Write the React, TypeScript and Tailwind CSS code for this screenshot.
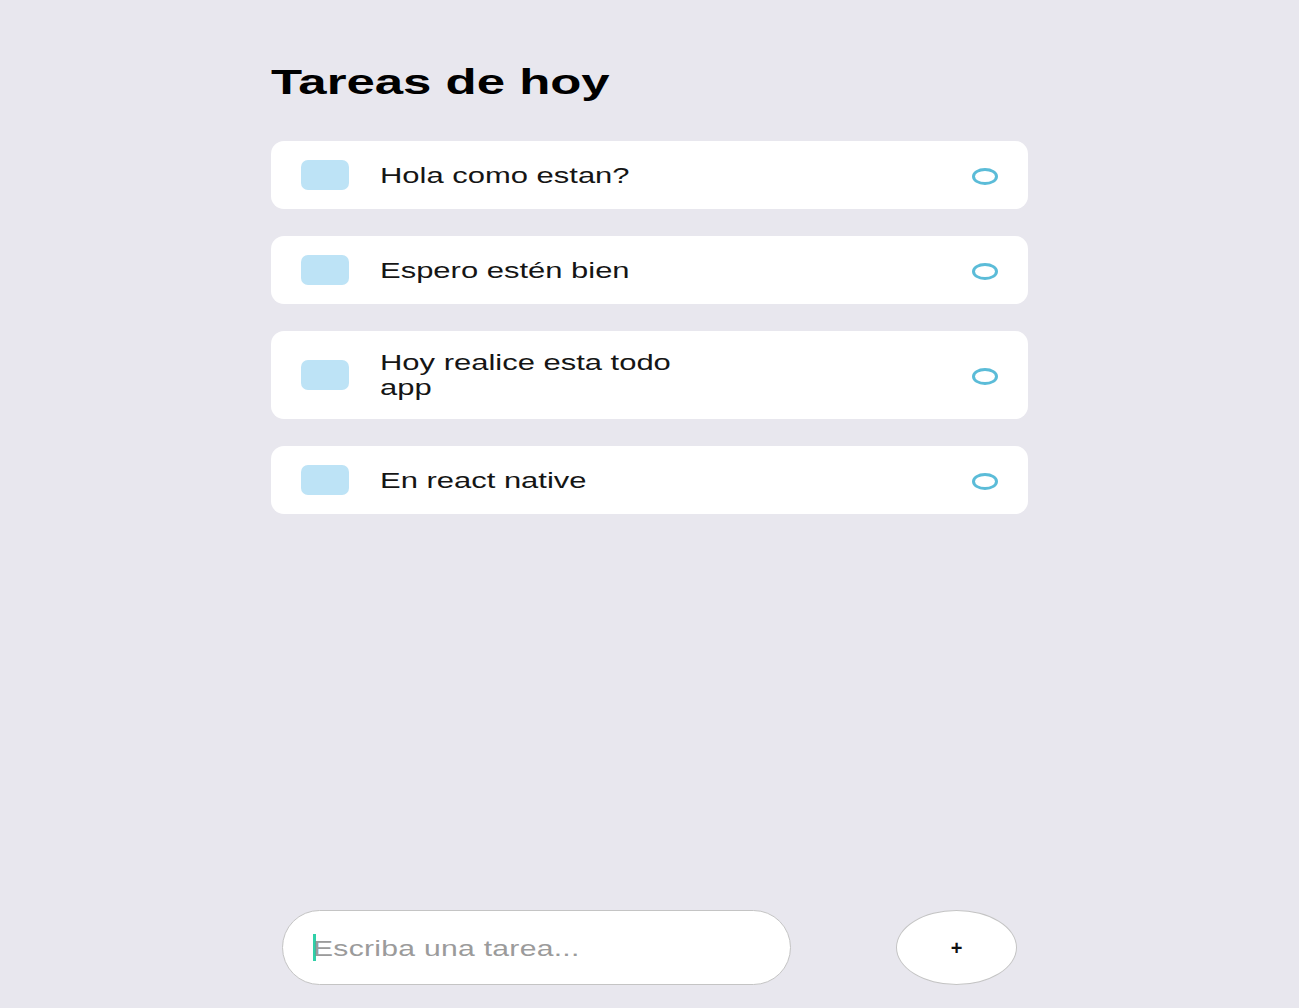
import React from 'react';

const tasks = ['Hola como estan?', 'Espero estén bien', 'Hoy realice esta todo app', 'En react native'];

const Task: React.FC<{ text: string }> = ({ text }) => (
  <div className="flex items-center justify-between bg-white rounded-[13px] px-[30px] py-[19px] mb-[27px]">
    <div className="flex items-center">
      <div className="w-[48px] h-[30px] rounded-[7px] bg-[#bde3f6] shrink-0" />
      <p className="ml-[31px] max-w-[220px] text-[21.5px] leading-[25px] text-[#151515] origin-left scale-x-[1.44] translate-y-[1px]">
        {text}
      </p>
    </div>
    <div className="w-[26px] h-[17px] mt-[2px] rounded-[50%] border-[3px] border-[#5bbcd8]" />
  </div>
);

export default function App() {
  return (
    <div
      className="h-screen w-full overflow-hidden bg-[#e8e7ee] flex flex-col"
      style={{ fontFamily: '"Liberation Sans", Arial, sans-serif' }}
    >
      <div className="w-[757px] mx-auto flex-1 flex flex-col">
        <div className="flex-1">
          <h1 className="w-fit pt-[59px] mb-[36px] text-[35px] leading-[46px] font-bold text-black origin-left scale-x-[1.455]">
            Tareas de hoy
          </h1>
          {tasks.map((t) => (
            <Task key={t} text={t} />
          ))}
        </div>

        {/* input row */}
        <div className="flex items-center justify-between px-[11px] pb-[23px]">
          <div className="w-[509px] h-[75px] rounded-full bg-white border border-[#c4c4c4] flex items-center pl-[30px]">
            <span className="w-[3px] h-[27px] bg-[#2fd0a8] mr-[-3px]" />
            <span className="pt-[3px] text-[21.5px] tracking-[0.2px] text-[#9b9b9b] origin-left scale-x-[1.40]">Escriba una tarea...</span>
          </div>
          <button className="w-[121px] h-[75px] rounded-[50%] bg-white border border-[#c4c4c4] flex items-center justify-center text-[20px] font-bold text-[#111]">
            +
          </button>
        </div>
      </div>
    </div>
  );
}
